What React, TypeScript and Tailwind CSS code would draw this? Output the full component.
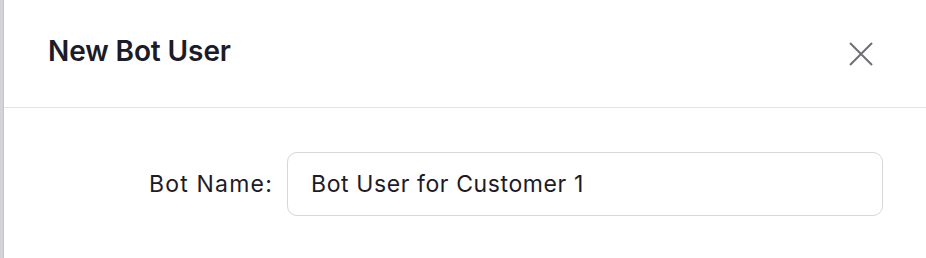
import React from 'react';

const App: React.FC = () => {
  const [botName, setBotName] = React.useState('Bot User for Customer 1');

  return (
    <div
      className="flex h-[258px] w-[926px] bg-white text-[#1c1b27]"
      style={{ fontFamily: 'Inter, "Noto Sans", sans-serif' }}
    >
      {/* page edge behind the modal */}
      <div className="w-[4px] shrink-0 bg-[#d4d4d8] border-r border-[#c4c4c8]" />

      <div className="flex flex-1 flex-col">
        {/* Header */}
        <div className="flex h-[108px] items-center justify-between border-b border-[#e4e4e7] pl-[44px] pr-[53px]">
          <h2 className="text-[28px] font-semibold tracking-[-0.1px] -mt-[6px]">New Bot User</h2>
          <button className="flex h-[24px] w-[24px] items-center justify-center text-[#6e6e76]" aria-label="Close">
            <svg width="24" height="24" viewBox="0 0 24 24" fill="none" stroke="currentColor" strokeWidth="2">
              <path d="M1 1l22 22M23 1L1 23" />
            </svg>
          </button>
        </div>

        {/* Body */}
        <div className="flex items-center pt-[44px] pl-[142px] pr-[43px]">
          <label className="w-[141px] shrink-0 pr-[14px] text-right text-[23px] tracking-[1.2px]">Bot Name:</label>
          <input
            value={botName}
            onChange={(e) => setBotName(e.target.value)}
            className="h-[64px] flex-1 rounded-[10px] border border-[#d6d6db] px-[23px] text-[23px] tracking-[0.6px] text-[#1c1b27] outline-none"
          />
        </div>
      </div>
    </div>
  );
};

export default App;
